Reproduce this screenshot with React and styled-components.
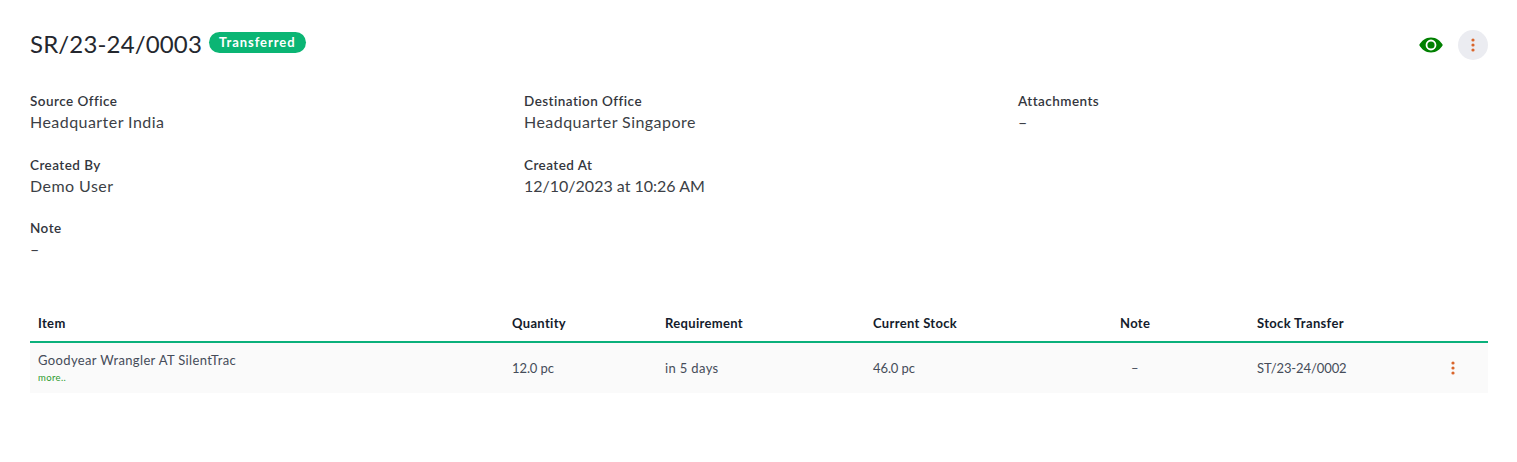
import styled, { createGlobalStyle } from "styled-components";

const GlobalStyle = createGlobalStyle`
  html, body {
    margin: 0;
    padding: 0;
    background: #fff;
    font-family: Lato, "Open Sans", sans-serif;
    color: #2a2d34;
  }
`;

const Page = styled.div`
  padding: 30px 29px 0 30px;
`;

const Header = styled.div`
  display: flex;
  align-items: center;
  justify-content: space-between;
  height: 30px;
`;

const TitleWrap = styled.div`
  display: flex;
  align-items: center;
  gap: 7px;
  margin-bottom: 2px;
`;

const Title = styled.h1`
  margin: 0;
  font-size: 24px;
  line-height: 30px;
  font-weight: 400;
  color: #24272e;
  letter-spacing: 0.15px;
`;

const Badge = styled.span`
  display: inline-block;
  background: #0bb574;
  color: #fff;
  font-size: 13px;
  font-weight: 700;
  line-height: 21px;
  height: 21px;
  padding: 0 10px;
  border-radius: 11px;
  letter-spacing: 0.95px;
  margin-top: -4px;
`;

const Actions = styled.div`
  display: flex;
  align-items: center;
  gap: 15px;
`;

const RoundButton = styled.button`
  width: 30px;
  height: 30px;
  padding: 0;
  border: none;
  border-radius: 50%;
  background: #ebecf1;
  display: flex;
  align-items: center;
  justify-content: center;
`;

const Details = styled.div`
  display: grid;
  grid-template-columns: 494px 494px 1fr;
  margin-top: 32px;
`;

const Field = styled.div`
  height: 63.5px;
`;

const Label = styled.div`
  font-size: 13.5px;
  line-height: 18px;
  font-weight: 600;
  color: #33363d;
  letter-spacing: 0.45px;
`;

const Value = styled.div`
  font-size: 16px;
  line-height: 22px;
  margin-top: 1px;
  color: #3c3f46;
  letter-spacing: ${({ $numeric }) => ($numeric ? "0" : "0.45px")};
`;

const Table = styled.table`
  width: 100%;
  table-layout: fixed;
  border-collapse: collapse;
  margin-top: 23px;
`;

const HeadCell = styled.th`
  height: 35px;
  padding: 0 8px;
  text-align: left;
  font-size: 13px;
  font-weight: 700;
  color: #141c2c;
  border-bottom: 2px solid #0bb07b;
  letter-spacing: 0.33px;
`;

const Cell = styled.td`
  height: 50px;
  padding: 0 8px;
  background: #fafafa;
  font-size: 13px;
  color: #454c59;
  letter-spacing: ${({ $numeric }) => ($numeric ? "-0.1px" : "0.36px")};
`;

const ItemName = styled.div`
  line-height: 17px;
`;

const More = styled.div`
  font-size: 9.5px;
  line-height: 12px;
  margin-top: 3px;
  color: #2e9a2e;
`;

const NoteDash = styled.span`
  padding-left: 11px;
`;

const RowMenu = styled.div`
  display: flex;
  padding-left: 6px;
`;

const columns = [474, 153, 208, 247, 137, 188, 51];

function Kebab() {
  return (
    <svg width="4" height="14" viewBox="0 0 4 14" fill="#d9652b">
      <circle cx="2" cy="2" r="1.6" />
      <circle cx="2" cy="7" r="1.6" />
      <circle cx="2" cy="12" r="1.6" />
    </svg>
  );
}

function EyeIcon() {
  return (
    <svg width="24" height="16" viewBox="0 0 24 16">
      <path
        fill="#008000"
        fillRule="evenodd"
        d="M12 0.5C6.5 0.5 2.4 4 0.2 8 2.4 12 6.5 15.5 12 15.5S21.6 12 23.8 8C21.6 4 17.5 0.5 12 0.5ZM12 2.6A5.4 5.4 0 1 1 12 13.4 5.4 5.4 0 0 1 12 2.6Z"
      />
      <circle cx="12" cy="8" r="3.6" fill="#008000" />
    </svg>
  );
}

export default function App() {
  return (
    <Page>
      <GlobalStyle />
      <Header>
        <TitleWrap>
          <Title>SR/23-24/0003</Title>
          <Badge>Transferred</Badge>
        </TitleWrap>
        <Actions>
          <EyeIcon />
          <RoundButton>
            <Kebab />
          </RoundButton>
        </Actions>
      </Header>

      <Details>
        <Field>
          <Label>Source Office</Label>
          <Value>Headquarter India</Value>
        </Field>
        <Field>
          <Label>Destination Office</Label>
          <Value>Headquarter Singapore</Value>
        </Field>
        <Field>
          <Label>Attachments</Label>
          <Value>–</Value>
        </Field>
        <Field>
          <Label>Created By</Label>
          <Value>Demo User</Value>
        </Field>
        <Field>
          <Label>Created At</Label>
          <Value $numeric>12/10/2023 at 10:26 AM</Value>
        </Field>
        <Field />
        <Field>
          <Label>Note</Label>
          <Value>–</Value>
        </Field>
      </Details>

      <Table>
        <colgroup>
          {columns.map((w, i) => (
            <col key={i} width={w} />
          ))}
        </colgroup>
        <thead>
          <tr>
            <HeadCell>Item</HeadCell>
            <HeadCell>Quantity</HeadCell>
            <HeadCell>Requirement</HeadCell>
            <HeadCell>Current Stock</HeadCell>
            <HeadCell>Note</HeadCell>
            <HeadCell>Stock Transfer</HeadCell>
            <HeadCell />
          </tr>
        </thead>
        <tbody>
          <tr>
            <Cell>
              <ItemName>Goodyear Wrangler AT SilentTrac</ItemName>
              <More>more..</More>
            </Cell>
            <Cell $numeric>12.0 pc</Cell>
            <Cell>in 5 days</Cell>
            <Cell $numeric>46.0 pc</Cell>
            <Cell>
              <NoteDash>–</NoteDash>
            </Cell>
            <Cell $numeric>ST/23-24/0002</Cell>
            <Cell>
              <RowMenu>
                <Kebab />
              </RowMenu>
            </Cell>
          </tr>
        </tbody>
      </Table>
    </Page>
  );
}
